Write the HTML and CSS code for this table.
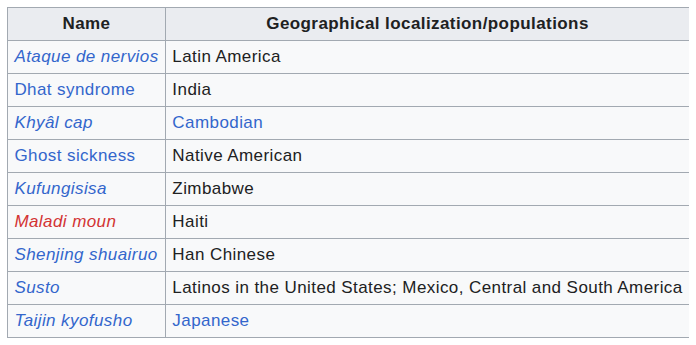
FILE: index.html
```html
<!DOCTYPE html>
<html lang="en">
<head>
<meta charset="utf-8">
<title>Culture-bound syndromes</title>
<link rel="stylesheet" href="styles.css">
</head>
<body>
<table class="wikitable">
  <thead>
    <tr><th>Name</th><th>Geographical localization/populations</th></tr>
  </thead>
  <tbody>
    <tr><td><a class="link it" href="#">Ataque de nervios</a></td><td>Latin America</td></tr>
    <tr><td><a class="link" href="#">Dhat syndrome</a></td><td>India</td></tr>
    <tr><td><a class="link it" href="#">Khyâl cap</a></td><td><a class="link" href="#">Cambodian</a></td></tr>
    <tr><td><a class="link" href="#">Ghost sickness</a></td><td>Native American</td></tr>
    <tr><td><a class="link it" href="#">Kufungisisa</a></td><td>Zimbabwe</td></tr>
    <tr><td><a class="link red it" href="#">Maladi moun</a></td><td>Haiti</td></tr>
    <tr><td><a class="link it" href="#">Shenjing shuairuo</a></td><td>Han Chinese</td></tr>
    <tr><td><a class="link it" href="#">Susto</a></td><td>Latinos in the United States; Mexico, Central and South America</td></tr>
    <tr><td><a class="link it" href="#">Taijin kyofusho</a></td><td><a class="link" href="#">Japanese</a></td></tr>
  </tbody>
</table>
</body>
</html>
```

FILE: styles.css
```css
html, body {
  background: #ffffff;
}
body {
  margin: 7px;
  font-family: "Liberation Sans", Arial, sans-serif;
  font-size: 17px;
  letter-spacing: 0.42px;
  color: #202122;
}
.wikitable {
  border-collapse: collapse;
  background: #f8f9fa;
  border: 1px solid #a2a9b1;
}
.wikitable th,
.wikitable td {
  border: 1px solid #a2a9b1;
  padding: 3.2px 6.4px;
  line-height: 25.6px;
  text-align: left;
  white-space: nowrap;
}
.wikitable th {
  background: #eaecf0;
  text-align: center;
  font-weight: bold;
}
.link {
  color: #3366cc;
  text-decoration: none;
}
.it {
  font-style: italic;
}
.red {
  color: #d33333;
}
```
